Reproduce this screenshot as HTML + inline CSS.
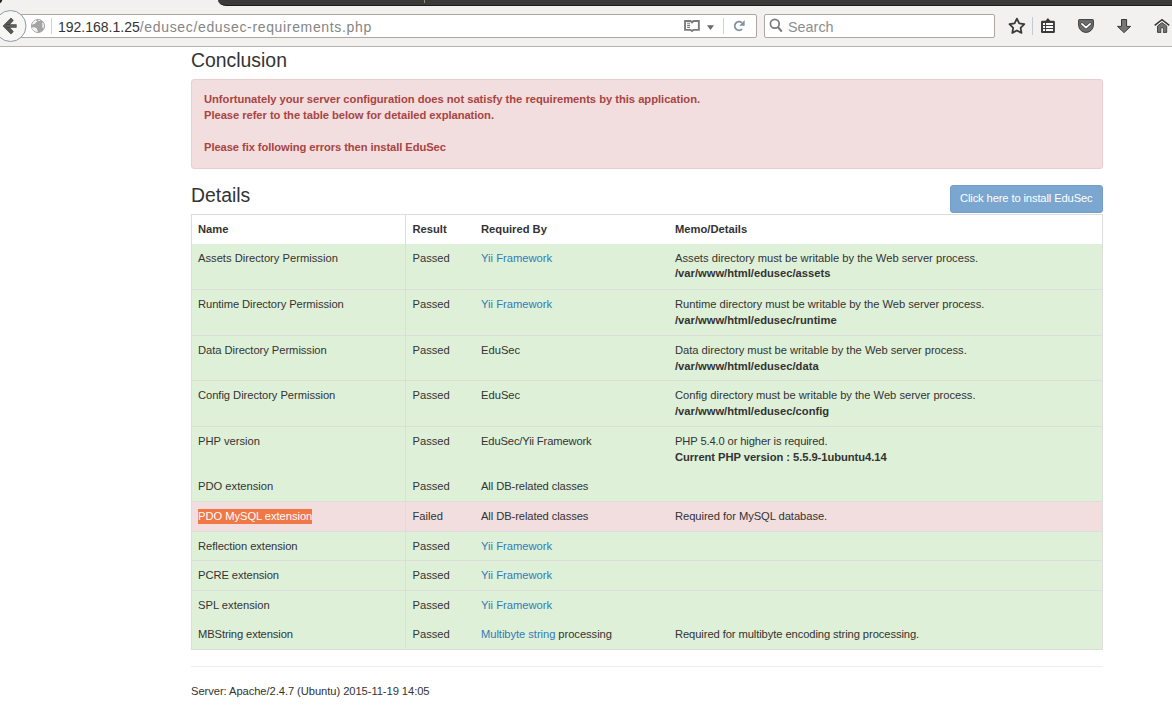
<!DOCTYPE html>
<html><head><meta charset="utf-8">
<style>
*{margin:0;padding:0;box-sizing:border-box}
html,body{width:1172px;height:707px;overflow:hidden;background:#fff;position:relative;font-family:"Liberation Sans",sans-serif}
.a{position:absolute}
#chrome{position:absolute;left:0;top:0;width:1172px;height:47px;background:#f2f1f0;border-bottom:1px solid #b6b3ae}
#tabbar{position:absolute;left:218px;top:0;width:954px;height:6px;background:#3c3b37;border-bottom-left-radius:10px 7px;border-bottom:1px solid #1d1c19}
.urlbar{position:absolute;top:14px;height:24px;background:#fff;border:1px solid #aca89f;border-radius:2px}
.t{position:absolute;white-space:nowrap;font-size:11.2px;line-height:16px;color:#333}
.b{font-weight:bold}
.lnk{color:#337ab7}
.row{position:absolute;left:191px;width:912px}
.hl{position:absolute;height:1px;background:#ddd}
.sel{background:#f07746;color:#fff;padding:1.5px 0 0.5px}
</style></head><body>
<div id="chrome">
  <div id="tabbar"></div>
  <div class="a" style="left:424px;top:0;width:1px;height:3px;background:#8f8d88"></div>
  <svg class="a" style="left:0;top:0" width="4" height="4" viewBox="0 0 4 4"><path d="M0 0 H2.3 Q2 2.4 0 3.3 Z" fill="#23282c"/></svg>
  <div class="urlbar" style="left:10px;width:747px"></div>
  <div class="urlbar" style="left:764px;width:231px"></div>
  <div class="a" style="left:58px;top:17px;font-size:14px;line-height:20px;color:#333;white-space:nowrap">192.168.1.25<span style="color:#858585;letter-spacing:0.66px">/edusec/edusec-requirements.php</span></div>
  <div class="a" style="left:788px;top:17px;font-size:14.4px;line-height:20px;color:#8d8d8d;white-space:nowrap">Search</div>
  <svg class="a" style="left:0;top:0" width="1172" height="47" viewBox="0 0 1172 47">
    <!-- back button -->
    <circle cx="10.5" cy="26" r="15.5" fill="#f6f6f5" stroke="#8d9aa8" stroke-width="1"/>
    <path d="M12.3 19.2 L5.5 26 L12.3 32.8" fill="none" stroke="#3a3a3a" stroke-width="3.9" stroke-linejoin="miter"/>
    <path d="M12.3 19.2 L5.5 26 L12.3 32.8" fill="none" stroke="#5a5a5a" stroke-width="2.5" stroke-linejoin="miter"/>
    <path d="M6.5 26 H16.6" fill="none" stroke="#3a3a3a" stroke-width="3.4"/>
    <path d="M6.5 26 H16" fill="none" stroke="#5e5e5e" stroke-width="2"/>
    <!-- globe -->
    <circle cx="38" cy="26" r="6.5" fill="#a4a4a4" stroke="#9c9c9c" stroke-width="0.9"/>
    <path d="M31.9 24.4 Q32.8 21.2 35.9 19.9 L37.3 21.3 L35.2 23.3 L33 24.6 Z" fill="#f6f6f6"/>
    <path d="M38 19.9 L40.3 20.2 L39.7 20.9 L38.3 20.9 Z" fill="#f6f6f6"/>
    <path d="M42.1 22.6 L43.5 23.3 Q44.4 26 43.6 28.1 L42.3 27.5 L42.4 25 Z" fill="#f6f6f6"/>
    <path d="M31.8 27.5 L34.2 27.3 L36.6 28.3 L38 32 Q34 31.9 32.1 28.6 Z" fill="#f6f6f6"/>
    <rect x="51" y="18" width="1" height="16" fill="#d5d2cd"/>
    <!-- reader -->
    <path d="M685.05 21.05 H690.6 L692 22.5 L693.4 21.05 H698.85 V29.85 H693.4 L692 31.1 L690.6 29.85 H685.05 Z" fill="#fff" stroke="#7a7a7a" stroke-width="1.9"/>
    <path d="M687.1 23.3 H690 M687.1 25.4 H690 M687.1 27.4 H690" stroke="#7a7a7a" stroke-width="1.1"/>
    <path d="M707 25.2 H714 L710.5 29.9 Z" fill="#6a6a6a"/>
    <rect x="723" y="18" width="1" height="16" fill="#d5d2cd"/>
    <!-- reload -->
    <path d="M741.8 22.7 A4.3 4.3 0 1 0 742.1 29.1" fill="none" stroke="#8092a2" stroke-width="1.9"/>
    <path d="M744.7 20.1 V25.7 H739.3 Z" fill="#8092a2"/>
    <!-- search magnifier -->
    <circle cx="774.8" cy="23.8" r="4.4" fill="none" stroke="#7a7a7a" stroke-width="1.7"/>
    <path d="M777.9 27 L781.8 31.6" stroke="#7a7a7a" stroke-width="2"/>
    <!-- star -->
    <path d="M1016.9 18.6 L1019.2 23.3 L1024.3 24.2 L1020.6 27.8 L1021.5 32.9 L1016.9 30.5 L1012.3 32.9 L1013.2 27.8 L1009.5 24.2 L1014.6 23.3 Z" fill="none" stroke="#3a3a3a" stroke-width="1.8" stroke-linejoin="round"/>
    <rect x="1032" y="17" width="1" height="18" fill="#c3cad2"/>
    <!-- reading list -->
    <path d="M1042.2 20.8 H1045.5 L1047.9 18.1 L1050.3 20.8 H1053.8 Q1054.9 20.8 1054.9 21.9 V31.9 Q1054.9 33 1053.8 33 H1042.1 Q1041 33 1041 31.9 V21.9 Q1041 20.8 1042.2 20.8 Z" fill="#3b3b3b"/>
    <path d="M1043 24 H1045 M1043 27 H1045 M1043 30 H1045 M1046 24 H1053 M1046 27 H1053 M1046 30 H1053" stroke="#fafafa" stroke-width="1.8"/>
    <!-- pocket -->
    <path d="M1079.2 19.6 H1092.8 Q1093.4 19.6 1093.4 20.2 V25 A7.4 7.4 0 0 1 1078.6 25 V20.2 Q1078.6 19.6 1079.2 19.6 Z" fill="#6d6d6d" stroke="#3d3d3d" stroke-width="1"/>
    <path d="M1081.9 23.9 L1086 27.6 L1090.1 23.9" fill="none" stroke="#3d3d3d" stroke-width="3.2" stroke-linecap="round" stroke-linejoin="round"/>
    <path d="M1081.9 23.9 L1086 27.6 L1090.1 23.9" fill="none" stroke="#fff" stroke-width="1.8" stroke-linecap="round" stroke-linejoin="round"/>
    <!-- download -->
    <path d="M1121.5 19.5 H1126.6 V26.4 H1130.6 L1124.05 32.6 L1117.5 26.4 H1121.5 Z" fill="#767676" stroke="#363636" stroke-width="1"/>
    <!-- home -->
    <path d="M1156.2 26.4 L1162 21.4 L1167.8 26.4" fill="none" stroke="#fbfbfb" stroke-width="1"/>
    <path d="M1154.7 25.3 L1162 19.6 L1169.3 25.3" fill="none" stroke="#353535" stroke-width="1.5"/>
    <path d="M1157.5 26 L1162 22.6 L1166.7 26 V32.4 H1163.2 V27.9 H1161.1 V32.4 H1157.5 Z" fill="#747474" stroke="#3a3a3a" stroke-width="0.9"/>
    <rect x="1161.5" y="28.4" width="1.3" height="4.2" fill="#f4f4f4"/>
  </svg>
</div>

<!-- page content -->
<div class="a" style="left:191px;top:48px;font-size:19.4px;line-height:24px;color:#333;white-space:nowrap">Conclusion</div>

<div class="a" style="left:191px;top:79px;width:912px;height:90px;background:#f2dede;border:1px solid #ebccd1;border-radius:3px"></div>
<div class="t b" style="left:204px;top:91px;color:#a94442;letter-spacing:-0.02px">Unfortunately your server configuration does not satisfy the requirements by this application.</div>
<div class="t b" style="left:204px;top:107px;color:#a94442;letter-spacing:-0.05px">Please refer to the table below for detailed explanation.</div>
<div class="t b" style="left:204px;top:139px;color:#a94442;letter-spacing:-0.08px">Please fix following errors then install EduSec</div>

<div class="a" style="left:191px;top:182.5px;font-size:19.4px;line-height:24px;color:#333;white-space:nowrap">Details</div>

<div class="a" style="left:950px;top:185px;width:153px;height:28px;background:#7aa6d0;border:1px solid #739fc6;border-radius:3px"></div>
<div class="t" style="left:960px;top:190px;color:#fff;letter-spacing:-0.13px">Click here to install EduSec</div>

<!-- table -->
<div class="a" style="left:191px;top:214px;width:912px;height:1px;background:#ddd"></div>
<div class="a" style="left:191px;top:214px;width:1px;height:436px;background:#ddd"></div>
<div class="a" style="left:1102px;top:214px;width:1px;height:436px;background:#ddd"></div>
<div class="t b" style="left:198px;top:220.92px">Name</div>
<div class="t b" style="left:412.5px;top:220.92px">Result</div>
<div class="t b" style="left:481px;top:220.92px">Required By</div>
<div class="t b" style="left:675px;top:220.92px">Memo/Details</div>
<div class="a" style="left:192px;top:244px;width:910px;height:1px;background:#d9ebd1"></div>
<div class="a" style="left:192px;top:244px;width:910px;height:45px;background:#dff0d8"></div>
<div class="a" style="left:192px;top:289px;width:910px;height:1px;background:#ddd"></div>
<div class="t" style="left:198px;top:249.62px">Assets Directory Permission</div>
<div class="t" style="left:412.5px;top:249.62px">Passed</div>
<div class="t" style="left:481px;top:249.62px"><span class="lnk">Yii Framework</span></div>
<div class="t" style="left:675px;top:249.62px">Assets directory must be writable by the Web server process.</div>
<div class="t" style="left:675px;top:265.42px"><b>/var/www/html/edusec/assets</b></div>
<div class="a" style="left:192px;top:290px;width:910px;height:45px;background:#dff0d8"></div>
<div class="a" style="left:192px;top:335px;width:910px;height:1px;background:#ddd"></div>
<div class="t" style="left:198px;top:295.92px;letter-spacing:-0.081px">Runtime Directory Permission</div>
<div class="t" style="left:412.5px;top:295.92px">Passed</div>
<div class="t" style="left:481px;top:295.92px"><span class="lnk">Yii Framework</span></div>
<div class="t" style="left:675px;top:295.92px;letter-spacing:-0.033px">Runtime directory must be writable by the Web server process.</div>
<div class="t" style="left:675px;top:311.62px"><b>/var/www/html/edusec/runtime</b></div>
<div class="a" style="left:192px;top:336px;width:910px;height:44px;background:#dff0d8"></div>
<div class="a" style="left:192px;top:380px;width:910px;height:1px;background:#ddd"></div>
<div class="t" style="left:198px;top:341.92px;letter-spacing:-0.050px">Data Directory Permission</div>
<div class="t" style="left:412.5px;top:341.92px">Passed</div>
<div class="t" style="left:481px;top:341.92px">EduSec</div>
<div class="t" style="left:675px;top:341.92px;letter-spacing:-0.026px">Data directory must be writable by the Web server process.</div>
<div class="t" style="left:675px;top:357.62px"><b>/var/www/html/edusec/data</b></div>
<div class="a" style="left:192px;top:381px;width:910px;height:45px;background:#dff0d8"></div>
<div class="a" style="left:192px;top:426px;width:910px;height:1px;background:#ddd"></div>
<div class="t" style="left:198px;top:386.72px;letter-spacing:-0.050px">Config Directory Permission</div>
<div class="t" style="left:412.5px;top:386.72px">Passed</div>
<div class="t" style="left:481px;top:386.72px">EduSec</div>
<div class="t" style="left:675px;top:386.72px;letter-spacing:-0.025px">Config directory must be writable by the Web server process.</div>
<div class="t" style="left:675px;top:402.62px"><b>/var/www/html/edusec/config</b></div>
<div class="a" style="left:192px;top:427px;width:910px;height:45px;background:#dff0d8"></div>
<div class="t" style="left:198px;top:432.92px">PHP version</div>
<div class="t" style="left:412.5px;top:432.92px">Passed</div>
<div class="t" style="left:481px;top:432.92px;letter-spacing:-0.142px">EduSec/Yii Framework</div>
<div class="t" style="left:675px;top:432.92px;letter-spacing:-0.129px">PHP 5.4.0 or higher is required.</div>
<div class="t" style="left:675px;top:448.62px;letter-spacing:-0.053px"><b>Current PHP version : 5.5.9-1ubuntu4.14</b></div>
<div class="a" style="left:192px;top:472px;width:910px;height:29px;background:#dff0d8"></div>
<div class="a" style="left:192px;top:501px;width:910px;height:1px;background:#ddd"></div>
<div class="t" style="left:198px;top:477.82px">PDO extension</div>
<div class="t" style="left:412.5px;top:477.82px">Passed</div>
<div class="t" style="left:481px;top:477.82px;letter-spacing:-0.095px">All DB-related classes</div>
<div class="a" style="left:192px;top:502px;width:910px;height:29px;background:#f2dede"></div>
<div class="a" style="left:198px;top:509px;width:114px;height:15px;background:#f07746"></div>
<div class="a" style="left:192px;top:531px;width:910px;height:1px;background:#ddd"></div>
<div class="t" style="left:198px;top:507.82px"><span style="color:#fff;letter-spacing:-0.05px">PDO MySQL extension</span></div>
<div class="t" style="left:412.5px;top:507.82px">Failed</div>
<div class="t" style="left:481px;top:507.82px;letter-spacing:-0.095px">All DB-related classes</div>
<div class="t" style="left:675px;top:507.82px;letter-spacing:-0.059px">Required for MySQL database.</div>
<div class="a" style="left:192px;top:532px;width:910px;height:28px;background:#dff0d8"></div>
<div class="a" style="left:192px;top:560px;width:910px;height:1px;background:#ddd"></div>
<div class="t" style="left:198px;top:537.82px;letter-spacing:-0.063px">Reflection extension</div>
<div class="t" style="left:412.5px;top:537.82px">Passed</div>
<div class="t" style="left:481px;top:537.82px"><span class="lnk">Yii Framework</span></div>
<div class="a" style="left:192px;top:561px;width:910px;height:29px;background:#dff0d8"></div>
<div class="a" style="left:192px;top:590px;width:910px;height:1px;background:#ddd"></div>
<div class="t" style="left:198px;top:566.72px;letter-spacing:-0.077px">PCRE extension</div>
<div class="t" style="left:412.5px;top:566.72px">Passed</div>
<div class="t" style="left:481px;top:566.72px"><span class="lnk">Yii Framework</span></div>
<div class="a" style="left:192px;top:591px;width:910px;height:29px;background:#dff0d8"></div>
<div class="t" style="left:198px;top:596.82px">SPL extension</div>
<div class="t" style="left:412.5px;top:596.82px">Passed</div>
<div class="t" style="left:481px;top:596.82px"><span class="lnk">Yii Framework</span></div>
<div class="a" style="left:192px;top:620px;width:910px;height:29px;background:#dff0d8"></div>
<div class="a" style="left:192px;top:649px;width:910px;height:1px;background:#ddd"></div>
<div class="t" style="left:198px;top:625.82px;letter-spacing:-0.118px">MBString extension</div>
<div class="t" style="left:412.5px;top:625.82px">Passed</div>
<div class="t" style="left:481px;top:625.82px;letter-spacing:-0.058px"><span class="lnk">Multibyte string</span> processing</div>
<div class="t" style="left:675px;top:625.82px;letter-spacing:-0.094px">Required for multibyte encoding string processing.</div>
<div class="a" style="left:405px;top:215px;width:1px;height:434px;background:#ddd"></div>
<div class="a" style="left:191px;top:666px;width:912px;height:1px;background:#eee"></div>
<div class="t" style="letter-spacing:-0.07px;left:191px;top:682.52px">Server: Apache/2.4.7 (Ubuntu) 2015-11-19 14:05</div>
</body></html>
